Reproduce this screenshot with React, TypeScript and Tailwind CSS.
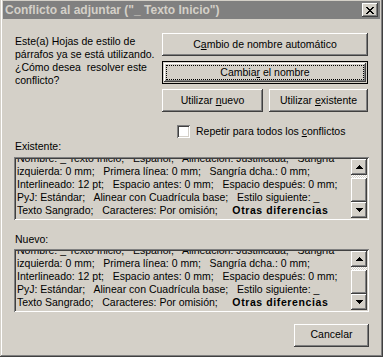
import React from 'react'

const RAISED =
  'shadow-[inset_-1px_-1px_#404040,inset_1px_1px_#ffffff,inset_-2px_-2px_#808080,inset_2px_2px_#d4d0c8]'
const SUNKEN =
  'shadow-[inset_1px_1px_#808080,inset_-1px_-1px_#ffffff,inset_2px_2px_#404040,inset_-2px_-2px_#d4d0c8]'
const FRAME =
  'shadow-[inset_-1px_-1px_#404040,inset_1px_1px_#d4d0c8,inset_-2px_-2px_#808080,inset_2px_2px_#ffffff]'

const LINES = [
  'Nombre: _ Texto Inicio;   Español;   Alineación: Justificada;   Sangría',
  'izquierda: 0 mm;   Primera línea: 0 mm;   Sangría dcha.: 0 mm;',
  'Interlineado: 12 pt;   Espacio antes: 0 mm;   Espacio después: 0 mm;',
  'PyJ: Estándar;   Alinear con Cuadrícula base;   Estilo siguiente: _',
]

const Arrow = ({ up }: { up?: boolean }) => (
  <svg width="7" height="4" viewBox="0 0 7 4" shapeRendering="crispEdges">
    <path d={up ? 'M3 0h1v1h1v1h1v1h1v1H0V3h1V2h1V1h1z' : 'M0 0h7v1H6v1H5v1H4v1H3V3H2V2H1V1H0z'} fill="#000" />
  </svg>
)

const Scrollbar = () => (
  <div className="flex w-[16px] flex-col">
    <div className={`flex h-[16px] items-center justify-center ${RAISED}`}>
      <Arrow up />
    </div>
    <div className="flex flex-1 flex-col bg-[repeating-conic-gradient(#ffffff_0_25%,#d4d0c8_0_50%)] bg-[length:2px_2px]">
      <div className="h-[3px]" />
      <div className={`flex-1 bg-[#d4d0c8] ${RAISED}`} />
    </div>
    <div className={`flex h-[16px] items-center justify-center ${RAISED}`}>
      <Arrow />
    </div>
  </div>
)

const StyleBox = () => (
  <div className={`flex h-[63px] p-[2px] ${SUNKEN}`}>
    <div className="flex-1 overflow-hidden pl-[1px]">
      <div className="mt-[-7px] whitespace-pre leading-[13px]">
        {LINES.map((l) => (
          <div key={l}>{l}</div>
        ))}
        <div>
          {'Texto Sangrado;   Caracteres: Por omisión;     '}
          <b className="tracking-[0.6px]">Otras diferencias</b>
        </div>
      </div>
    </div>
    <Scrollbar />
  </div>
)

const Button = ({ children, className = '' }: { children: React.ReactNode; className?: string }) => (
  <div className={`flex h-[23px] items-center justify-center bg-[#d4d0c8] ${RAISED} ${className}`}>{children}</div>
)

export default function App() {
  return (
    <div className="h-[357px] w-[383px] overflow-hidden bg-[#d4d0c8]">
      <div
        className={`mt-[-2px] flex h-[359px] w-[383px] flex-col p-[3px] text-[10.5px] text-black ${FRAME}`}
        style={{ fontFamily: '"Liberation Sans", Arial, sans-serif' }}
      >
        <div className="flex h-[18px] items-center justify-between bg-[#808080] pl-[2px] pr-[2px]">
          <span className="text-[12px] font-bold text-[#d4d0c8]">Conflicto al adjuntar ("_ Texto Inicio")</span>
          <div className={`flex h-[14px] w-[16px] items-center justify-center bg-[#d4d0c8] ${RAISED}`}>
            <svg width="8" height="7" viewBox="0 0 8 7" shapeRendering="crispEdges">
              <path
                d="M0 0h2v1h1v1h2V1h1V0h2v1H7v1H6v1H5v1h1v1h1v1h1v1H6V6H5V5H3v1H2v1H0V6h1V5h1V4h1V3H2V2H1V1H0z"
                fill="#000"
              />
            </svg>
          </div>
        </div>

        <div className="flex flex-1 flex-col px-[11px] pt-[14px]">
          <div className="flex justify-between">
            <div className="mt-[2px] pl-[1px] leading-[13px]">
              Este(a) Hojas de estilo de
              <br />
              párrafos ya se está utilizando.
              <br />
              ¿Cómo desea&nbsp; resolver este
              <br />
              conflicto?
            </div>
            <div className="mr-[1px] flex w-[206px] flex-col">
              <Button>
                C<u>a</u>mbio de nombre automático
              </Button>
              <div className={`mt-[5px] flex h-[23px] border border-black bg-[#d4d0c8] p-[1px]`}>
                <div className={`flex flex-1 p-[2px] ${RAISED}`}>
                  <div className="flex flex-1 items-center justify-center border border-dotted border-black">
                    Cambia<u>r</u>&nbsp;el nombre
                  </div>
                </div>
              </div>
              <div className="mt-[5px] flex justify-between">
                <Button className="w-[101px]">
                  Utilizar&nbsp;<u>n</u>uevo
                </Button>
                <Button className="w-[99px]">
                  Utilizar&nbsp;<u>e</u>xistente
                </Button>
              </div>
              <div className="mt-[12px] flex items-center pl-[15px]">
                <div className={`h-[13px] w-[13px] bg-white ${SUNKEN}`} />
                <span className="ml-[6px]">
                  Repetir para todos los <u>c</u>onflictos
                </span>
              </div>
            </div>
          </div>

          <div className="pl-[1px] leading-[13px]">Existente:</div>
          <div className="mt-[4px]">
            <StyleBox />
          </div>

          <div className="mt-[13px] pl-[1px] leading-[13px]">Nuevo:</div>
          <div className="mt-[3px]">
            <StyleBox />
          </div>

          <div className="mt-[12px] flex justify-end">
            <Button className="w-[75px]">Cancelar</Button>
          </div>
        </div>
      </div>
    </div>
  )
}
